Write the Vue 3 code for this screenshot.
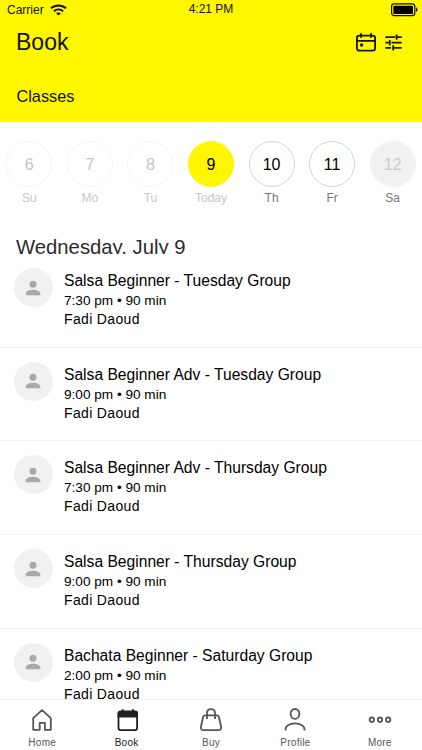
<template>
  <div class="screen">
    <header class="header">
      <div class="status-bar">
        <div class="carrier">
          <span>Carrier</span>
          <svg width="17" height="12" viewBox="0 0 17 12" fill="none" stroke="#111100">
            <path d="M1 4.3C5.2.4 11.8.4 16 4.3" stroke-width="2" />
            <path d="M3.9 7.2c2.6-2.4 6.6-2.4 9.2 0" stroke-width="1.9" />
            <path d="M8.5 11.6 6.1 9.3c1.3-1.2 3.5-1.2 4.8 0z" fill="#111100" stroke="none" />
          </svg>
        </div>
        <span class="time">4:21 PM</span>
        <svg class="battery" width="27" height="14" viewBox="0 0 27 14" fill="none">
          <rect x=".6" y=".9" width="23.2" height="11.8" rx="2.6" stroke="#111100" stroke-width="1.2" />
          <rect x="2.4" y="2.7" width="19.6" height="8.2" rx="1" fill="#000" />
          <path d="M25 4.6c2 .6 2 3.8 0 4.4z" fill="#111100" />
        </svg>
      </div>
      <div class="title-bar">
        <h1>Book</h1>
        <div class="actions">
          <svg width="20" height="19" viewBox="0 0 20 19" fill="none" stroke="#161600" stroke-width="1.8">
            <rect x=".9" y="2.7" width="18.2" height="15" rx="2.4" />
            <path d="M1 7.9h18M5 .2v4.6M15 .2v4.6" />
            <circle cx="5.6" cy="12" r="1.7" fill="#161600" stroke="none" />
          </svg>
          <svg width="17" height="17" viewBox="0 0 17 17" fill="none" stroke="#161600" stroke-width="1.8">
            <path d="M.4 3.2h9.8M12.4 3.2h4.3M11.6.6v5.2M.4 8.6h3.4M6.6 8.6h10.1M4.8 6v5.2M.4 13.9h5.6M8.6 13.9h8.1M8.2 11.3v5.2" />
          </svg>
        </div>
      </div>
      <div class="subtitle">Classes</div>
    </header>

    <div class="days">
      <div v-for="day in days" :key="day.date" class="day" :class="day.state">
        <div class="date">{{ day.date }}</div>
        <div class="weekday">{{ day.label }}</div>
      </div>
    </div>

    <h2 class="list-heading">Wednesday, July 9</h2>

    <main class="classes">
      <div v-for="item in classes" :key="item.name" class="class-item">
        <div class="avatar">
          <svg width="16" height="16" viewBox="0 0 16 16" fill="#a9a9a9">
            <circle cx="8" cy="4.2" r="3.5" />
            <path d="M.7 15.3v-1.8c0-2.4 4.2-3.8 7.3-3.8s7.3 1.4 7.3 3.8v1.8z" />
          </svg>
        </div>
        <div class="details">
          <div class="name">{{ item.name }}</div>
          <div class="time-info">{{ item.time }} • 90 min</div>
          <div class="teacher">Fadi Daoud</div>
        </div>
      </div>
    </main>

    <nav class="tabs">
      <div
        v-for="tab in tabs"
        :key="tab"
        class="tab"
        :class="{ active: tab === activeTab }"
        @click="activeTab = tab"
      >
        <svg width="26" height="26" viewBox="0 0 26 26" fill="none" stroke="currentColor" stroke-width="1.8">
          <path
            v-if="tab === 'Home'"
            d="M4.2 22.8V11.2L13 3.1l8.8 8.1v11.6h-5.9v-7h-5.2v7z"
            stroke-linejoin="round"
          />
          <template v-else-if="tab === 'Book'">
            <rect x="4.5" y="4.5" width="18.6" height="18.6" rx="2" />
            <path d="M3.6 10.5V6a2 2 0 0 1 2-2H22a2 2 0 0 1 2 2v4.5z" fill="currentColor" stroke="none" />
            <path d="M8.6 2.2v3M19 2.2v3" stroke-width="2" />
          </template>
          <template v-else-if="tab === 'Buy'">
            <path d="M7.3 8.4h11.4c1.3 0 2 .6 2.3 1.8l2.1 9.6c.4 2-.7 3.400-2.600 3.400h-15c-1.900 0-3-1.400-2.600-3.400L5 10.200c.3-1.200 1-1.800 2.300-1.800z" />
            <path d="M9 12V6.200C9 3.600 10.700 2.200 13 2.200s4 1.400 4 4V12" />
          </template>
          <template v-else-if="tab === 'Profile'">
            <ellipse cx="13" cy="6.9" rx="4.4" ry="4.9" />
            <path d="M3.5 23.6v-1.2c0-3.2 3.5-6 9.5-6s9.5 2.800 9.500 6v1.200" />
          </template>
          <template v-else>
            <circle cx="4.8" cy="12.7" r="2.2" />
            <circle cx="13" cy="12.7" r="2.2" />
            <circle cx="21.2" cy="12.7" r="2.2" />
          </template>
        </svg>
        <span>{{ tab }}</span>
      </div>
    </nav>
  </div>
</template>

<script setup>
import { ref } from "vue";

const activeTab = ref("Book");

const tabs = ["Home", "Book", "Buy", "Profile", "More"];

const days = [
  { date: 6, label: "Su", state: "past" },
  { date: 7, label: "Mo", state: "past" },
  { date: 8, label: "Tu", state: "past" },
  { date: 9, label: "Today", state: "today" },
  { date: 10, label: "Th", state: "" },
  { date: 11, label: "Fr", state: "" },
  { date: 12, label: "Sa", state: "empty" },
];

const classes = [
  { name: "Salsa Beginner - Tuesday Group", time: "7:30 pm" },
  { name: "Salsa Beginner Adv - Tuesday Group", time: "9:00 pm" },
  { name: "Salsa Beginner Adv - Thursday Group", time: "7:30 pm" },
  { name: "Salsa Beginner - Thursday Group", time: "9:00 pm" },
  { name: "Bachata Beginner - Saturday Group", time: "2:00 pm" },
];
</script>

<style>
body {
  margin: 0;
}
</style>

<style scoped>
.screen {
  height: 750px;
  display: flex;
  flex-direction: column;
  overflow: hidden;
  background-color: #fff;
  color: #000;
  font-family: "Liberation Sans", Arial, sans-serif;
}
.screen svg {
  display: block;
}
.header {
  flex: none;
  height: 122px;
  background-color: #fff700;
  color: #111100;
}
.status-bar {
  display: grid;
  grid-template-columns: 1fr auto 1fr;
  align-items: center;
  height: 19px;
  padding: 0 4px 0 7px;
  font-size: 12px;
}
.carrier {
  display: flex;
  align-items: center;
  gap: 6px;
}
.time {
  margin: 0 3px 1px 0;
}
.battery {
  justify-self: end;
}
.title-bar {
  display: flex;
  justify-content: space-between;
  align-items: center;
  height: 47px;
  padding: 0 20px 0 16px;
}
h1 {
  margin: 0;
  font-size: 23px;
  font-weight: normal;
}
.actions {
  display: flex;
  align-items: center;
  gap: 9px;
}
.subtitle {
  padding: 0 16.5px;
  font-size: 16.3px;
  line-height: 60px;
}
.days {
  flex: none;
  display: grid;
  grid-template-columns: repeat(7, 1fr);
  height: 109px;
  margin: 0 -1px;
  padding-top: 19px;
  box-sizing: border-box;
}
.day {
  display: flex;
  flex-direction: column;
  align-items: center;
  color: #000;
}
.date {
  width: 46px;
  height: 46px;
  box-sizing: border-box;
  border: 1px solid #d4d4d4;
  border-radius: 50%;
  font-size: 16px;
  line-height: 45px;
  text-align: center;
}
.weekday {
  margin-top: 4px;
  font-size: 12px;
  line-height: 15px;
  color: #777;
}
.past .date {
  border-color: #f5f5f5;
  color: #c4c4c4;
}
.past .weekday,
.today .weekday {
  color: #c8c8c8;
}
.today .date {
  border-color: #fff700;
  background-color: #fff700;
}
.empty .date {
  border-color: #f1f1f1;
  background-color: #f1f1f1;
  color: #cbcbcb;
}
.list-heading {
  flex: none;
  height: 23px;
  margin: 0;
  padding-left: 16px;
  overflow: hidden;
  font-size: 20.3px;
  font-weight: normal;
  line-height: 32px;
  color: #2b2b2b;
}
.classes {
  flex: 1;
  min-height: 0;
  overflow: hidden;
}
.class-item {
  display: flex;
  gap: 11.5px;
  height: 93.7px;
  padding: 14px 0 0 13.5px;
  box-sizing: border-box;
  border-bottom: 1px solid #f1f1f1;
}
.avatar {
  display: flex;
  justify-content: center;
  align-items: center;
  width: 39px;
  height: 39px;
  border-radius: 50%;
  background-color: #f1f1f1;
}
.details {
  padding-top: 2px;
}
.name {
  font-size: 15.63px;
  line-height: 21px;
}
.time-info {
  font-size: 13.6px;
  line-height: 19px;
}
.teacher {
  font-size: 14px;
  line-height: 19px;
  letter-spacing: 0.35px;
}
.tabs {
  flex: none;
  display: grid;
  grid-template-columns: repeat(5, 1fr);
  height: 51px;
  box-sizing: border-box;
  border-top: 1px solid #f1f1f1;
  background-color: #fff;
}
.tab {
  display: flex;
  flex-direction: column;
  align-items: center;
  padding-top: 7px;
  color: #55555a;
  font-size: 10px;
  line-height: 19px;
  letter-spacing: 0.25px;
  cursor: pointer;
}
.active {
  color: #202024;
}
</style>
